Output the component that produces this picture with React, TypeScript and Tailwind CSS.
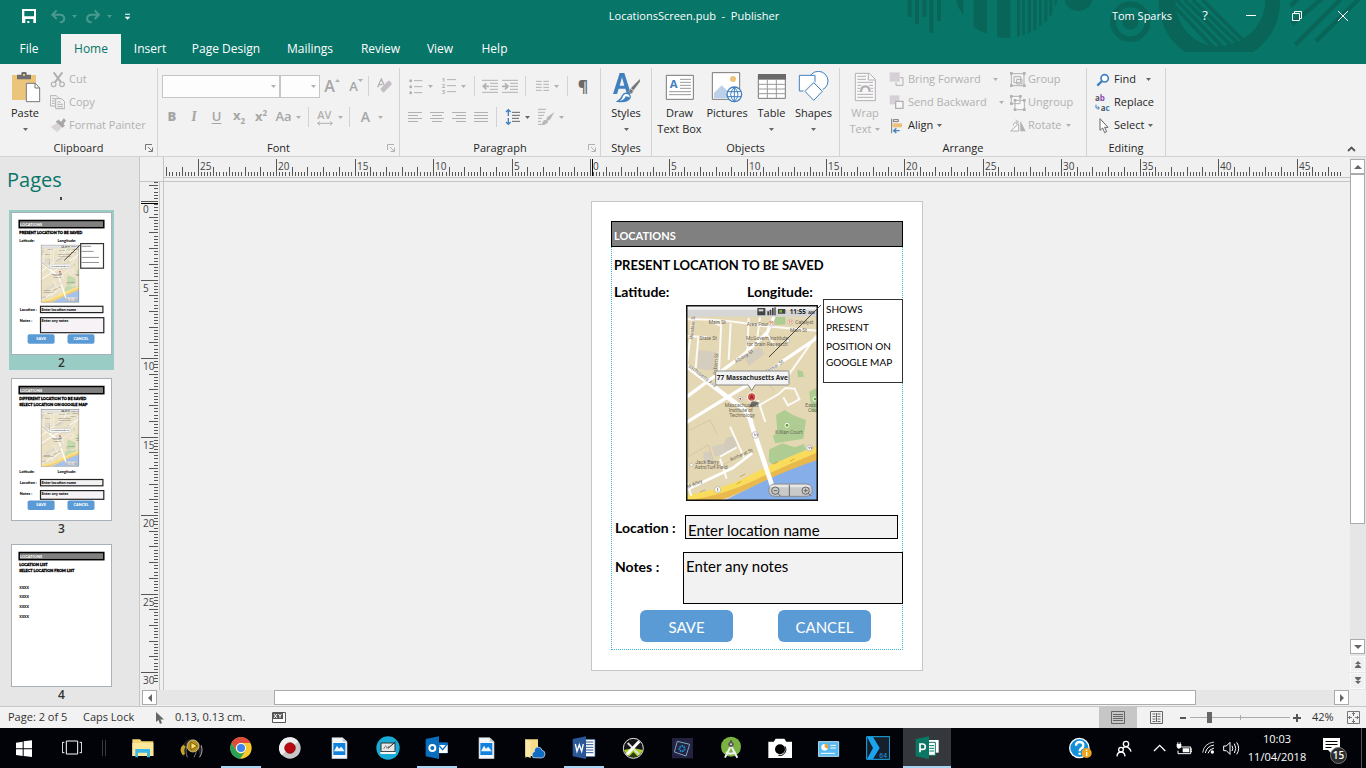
import type { ReactNode } from "react";

const UI = "font-['Open_Sans','Noto_Sans',sans-serif]";
const GREY = "#b1b1b1";
const DARK = "#666666";
const BLUE = "#4080bf";

type Box = [number, number, number, number];

/** Icon drawn on a grid three times finer than the screen. */
function Icon({ b, children }: { b: Box; children: ReactNode }) {
  return (
    <svg viewBox={b.join(" ")} width={b[2] / 3} height={b[3] / 3} className="shrink-0" aria-hidden="true">
      {children}
    </svg>
  );
}

function Caret({ color = DARK }: { color?: string }) {
  return (
    <svg viewBox="0 0 5 3" width="5" height="3" className="shrink-0" aria-hidden="true">
      <path d="M0 0h5L2.5 3z" fill={color} />
    </svg>
  );
}

function Launcher({ color }: { color: string }) {
  return (
    <svg viewBox="0 0 8 8" width="8" height="8" className="absolute right-1 bottom-1" aria-hidden="true">
      <path d="M0.5 6V0.5H7M3 3l4 4M7.5 3.5v4h-4" fill="none" stroke={color} />
    </svg>
  );
}

function Group({ label, width, launcher, children }: { label: string; width: string; launcher?: string; children: ReactNode }) {
  return (
    <section aria-label={label} className={`relative flex shrink-0 flex-col border-r border-[#d2d2d2] ${width}`}>
      <div className="flex-1">{children}</div>
      <div className="h-4 text-center leading-4">{label}</div>
      {launcher && <Launcher color={launcher} />}
    </section>
  );
}

function Big({ icon, lines, width, off, caret }: { icon: ReactNode; lines: string[]; width: string; off?: boolean; caret?: boolean }) {
  return (
    <button className={`flex shrink-0 flex-col items-center ${width} ${off ? "text-[#b1b1b1]" : ""}`}>
      <span className="flex h-[37px] items-center">{icon}</span>
      <span className="h-4 leading-4 whitespace-nowrap">{lines[0]}</span>
      <span className="flex h-4 items-center gap-1 leading-4 whitespace-nowrap">
        {lines[1]}
        {caret && <Caret color={off ? GREY : DARK} />}
      </span>
    </button>
  );
}

function Small({ icon, text, off, caret, gap = "gap-1" }: { icon: ReactNode; text: string; off?: boolean; caret?: boolean; gap?: string }) {
  return (
    <button className={`flex h-[23px] items-center whitespace-nowrap ${off ? "text-[#b1b1b1]" : ""}`}>
      <span className="flex w-[19px] shrink-0 items-center justify-start">{icon}</span>
      <span className={`flex items-center ${gap}`}>
        {text}
        {caret && <Caret color={off ? GREY : DARK} />}
      </span>
    </button>
  );
}

function Cell({ w, label, caret, on, children }: { w: string; label: string; caret?: boolean; on?: boolean; children: ReactNode }) {
  return (
    <button aria-label={label} className={`flex h-6 shrink-0 items-center justify-center gap-1 text-[13px] font-semibold text-[#a6a6a6] ${w}`}>
      {children}
      {caret && <Caret color={on ? DARK : GREY} />}
    </button>
  );
}

const Sep = () => <span className="mx-1 h-5 w-px shrink-0 bg-[#d2d2d2]" />;

function Lines({ rows, w = 14, h = 10 }: { rows: [number, number, number][]; w?: number; h?: number }) {
  return (
    <svg width={w} height={h} viewBox={`0 0 ${w} ${h}`} className="shrink-0" aria-hidden="true">
      {rows.map(([x, y, len]) => (
        <rect key={`${x}-${y}`} x={x} y={y} width={len} height="1" fill={GREY} />
      ))}
    </svg>
  );
}

function TitleArt() {
  return (
    <svg viewBox="0 0 1458 192" width="486" height="64" className="absolute top-0 right-0" aria-hidden="true">
      <g fill="#086558">
        <path d="M83 0h12v50H83zM105 0h12v72h-12zM127 0h12v50h-12zM148 0h12v98h-12zM171 0h12v63h-12z" />
        <path d="M228 0h22v44Q234 25 228 0zM281 0h40v102q-22-8-40-22zM351 0h40v114q-20 1-40-4zM411 0h9v108l-9 2zM427 0h8v104l-8 3zM443 0h10v96l-10 4zM460 0h9v88l-9 5zM477 0h8v76l-8 6zM493 0h9v60l-9 8zM508 0h9v42l-9 10zM524 0h8q-2 12-8 24z" />
        <path d="M554 0h83a42 39 0 0 1-83 0z" />
        <circle cx="751" cy="65" r="24" />
        <path d="M836 0h50c0 80 60 139 125 139 75 0 145-59 145-139h44c0 70-30 120-80 156H918C865 125 836 65 836 0z" />
      </g>
      <g fill="none" stroke="#086558">
        <circle cx="751" cy="65" r="52" strokeWidth="17" />
        <path d="M866 0l138 146M890 0l140 143M914 0l140 137M938 0l138 132M968 0l122 122" strokeWidth="11" />
        <path d="M1232 18l20-20M1236 72l90-76M1246 134L1382-2M1308 124L1437-4" strokeWidth="13" />
      </g>
    </svg>
  );
}

function TitleBar() {
  return (
    <header className="relative h-16 shrink-0 bg-[#077568] text-white">
      <TitleArt />
      <div className="relative flex h-8 items-center text-[11px]">
        <div className="flex flex-1 items-center pl-[22px]">
          <button aria-label="Save">
            <Icon b={[66, 30, 42, 42]}>
              <path d="M66 30h42v42H66zM73 36v16h29V36zM76 60v12h6v-6h6v6h12V60z" fill="#fff" fillRule="evenodd" />
            </Icon>
          </button>
          <button aria-label="Undo" className="ml-[14px] flex items-center gap-1.5">
            <Icon b={[150, 27, 48, 45]}>
              <path d="M170 31l-13 13 13 13M157 44h22c18 0 18 22 0 23" fill="none" stroke="#4a9a90" strokeWidth="6" />
            </Icon>
            <Caret color="#4a9a90" />
          </button>
          <button aria-label="Redo" className="ml-2 flex items-center gap-1.5">
            <Icon b={[255, 27, 48, 45]}>
              <path d="M284 31l13 13-13 13M297 44h-22c-18 0-18 22 0 23" fill="none" stroke="#4a9a90" strokeWidth="6" />
            </Icon>
            <Caret color="#4a9a90" />
          </button>
          <button aria-label="Customize Quick Access Toolbar" className="ml-3">
            <Icon b={[372, 39, 21, 21]}>
              <path d="M375 41h15v3h-15zM374 50h17l-8.500 9z" fill="#fff" />
            </Icon>
          </button>
        </div>
        <h1 className="whitespace-pre">LocationsScreen.pub  -  Publisher</h1>
        <div className="flex flex-1 items-center justify-end">
          <span className="mr-[10px]">Tom Sparks</span>
          <button className="w-[46px] text-[13px]" aria-label="Help">?</button>
          <button className="flex w-[46px] justify-center" aria-label="Minimize">
            <svg width="10" height="10" viewBox="0 0 10 10"><path d="M0 4.500h10" stroke="#fff" /></svg>
          </button>
          <button className="flex w-[46px] justify-center" aria-label="Restore">
            <svg width="10" height="10" viewBox="0 0 10 10" fill="none" stroke="#fff"><path d="M.5 2.500h7v7h-7zM2.500 2.500v-2h7v7h-2" /></svg>
          </button>
          <button className="flex w-[46px] justify-center" aria-label="Close">
            <svg width="10" height="10" viewBox="0 0 10 10"><path d="M0 0l10 10M10 0L0 10" stroke="#fff" /></svg>
          </button>
        </div>
      </div>
      <nav className="relative flex h-8 items-end text-xs">
        <button className="mr-[3px] h-[30px] w-[58px]">File</button>
        <button className="h-[30px] w-[60px] bg-[#f2f2f2] text-[#077568]">Home</button>
        <button className="h-[30px] w-[58px]">Insert</button>
        <button className="h-[30px] w-[94px]">Page Design</button>
        <button className="h-[30px] w-[74px]">Mailings</button>
        <button className="h-[30px] w-[67px]">Review</button>
        <button className="h-[30px] w-[52px]">View</button>
        <button className="h-[30px] w-[57px]">Help</button>
      </nav>
    </header>
  );
}

function Combo({ w, label }: { w: string; label: string }) {
  return (
    <span className={`relative flex h-[23px] shrink-0 items-center ${w}`}>
      <select aria-label={label} className="h-full w-full appearance-none border border-[#c6c6c6] bg-[#fdfdfd]">
        <option></option>
      </select>
      <span className="pointer-events-none absolute right-1 flex">
        <Caret color={GREY} />
      </span>
    </span>
  );
}

function ClipboardGroup() {
  return (
    <Group label="Clipboard" width="w-[158px]" launcher="#777777">
      <div className="flex">
        <Big
          width="w-[50px]"
          lines={["Paste"]}
          caret
          icon={
            <Icon b={[33, 213, 93, 96]}>
              <path d="M39 225h72v75H39z" fill="#ecc57d" />
              <path d="M54 238v-14h13v-4q0-4 4-4h8q4 0 4 4v4h13v14z" fill="#6f6f6f" />
              <path d="M72 222h6v5h-6z" fill="#ecc57d" />
              <path d="M82 250h27l13 14v41H82z" fill="#fff" stroke="#777" strokeWidth="3" />
              <path d="M108 250v14h14" fill="none" stroke="#777" strokeWidth="3" />
            </Icon>
          }
        />
        <div>
          <Small off text="Cut" icon={
            <Icon b={[147, 210, 45, 48]}>
              <path d="M158 211l22 30M184 211l-22 30" stroke={GREY} strokeWidth="6" />
              <g fill="none" stroke={GREY} strokeWidth="3.500"><circle cx="158" cy="247" r="7" /><circle cx="183" cy="247" r="7" /></g>
            </Icon>
          } />
          <Small off text="Copy" icon={
            <Icon b={[147, 282, 45, 45]}>
              <g fill="#f2f2f2" stroke={GREY} strokeWidth="3">
                <path d="M148 284h18l9 9v22h-27z" /><path d="M164 293h18l9 9v21h-27z" />
                <path d="M153 293h10M153 300h8M153 307h8M169 303h10M169 310h17M169 317h17" />
              </g>
            </Icon>
          } />
          <Small off text="Format Painter" icon={
            <Icon b={[147, 348, 48, 45]}>
              <path d="M149 374l22-12 14 12-17 17z" fill="#d9d4d9" />
              <path d="M165 359l8-5 18 17-6 5zM180 362l8-12 6 5-8 12z" fill="#a6a6a6" stroke="#a6a6a6" strokeWidth="2" />
            </Icon>
          } />
        </div>
      </div>
    </Group>
  );
}

function FontGroup() {
  return (
    <Group label="Font" width="w-[242px]" launcher={GREY}>
      <div className="flex items-center pt-1.5 pl-1">
        <Combo w="w-[118px]" label="Font name" />
        <Combo w="w-[40px]" label="Font size" />
        <Cell w="w-6" label="Grow font"><span className="text-base leading-none">A</span><span className="-ml-1 mb-3 rotate-180"><Caret color={GREY} /></span></Cell>
        <Cell w="w-6" label="Shrink font"><span className="leading-none">A</span><span className="-ml-1 mb-3"><Caret color={GREY} /></span></Cell>
        <span className="h-5 w-px shrink-0 bg-[#d2d2d2]" />
        <Cell w="w-[30px]" label="Clear formatting">
          <Icon b={[1131, 234, 45, 48]}>
            <path d="M1133 262l11-25 8 18M1137 254h10" fill="none" stroke={GREY} strokeWidth="4" />
            <path d="M1143 264l21-21q3-2 6 1l4 5q2 3 0 5l-21 22q-3 2-6-1l-5-6q-1-2 1-5z" fill="#c4bfc4" />
          </Icon>
        </Cell>
      </div>
      <div className="flex items-center pt-[7px] pl-[3px]">
        <Cell w="w-[22px]" label="Bold"><b>B</b></Cell>
        <Cell w="w-[22px]" label="Italic"><i className="font-serif text-sm">I</i></Cell>
        <Cell w="w-[23px]" label="Underline"><span className="underline underline-offset-2">U</span></Cell>
        <Cell w="w-[22px]" label="Subscript"><span className="font-bold">x<span className="align-sub text-[8px]">2</span></span></Cell>
        <Cell w="w-[22px]" label="Superscript"><span className="font-bold">x<span className="align-super text-[8px]">2</span></span></Cell>
        <Cell w="w-8" label="Change case" caret>Aa</Cell>
        <Sep />
        <Cell w="w-8" label="Character spacing" caret>
          <Icon b={[948, 318, 54, 60]}>
            <text x="952" y="354" fontSize="33" fill={GREY} fontWeight="600">AV</text>
            <path d="M953 367h44M960 361l-7 6 7 6M990 361l7 6-7 6" fill="none" stroke={GREY} strokeWidth="3" />
          </Icon>
        </Cell>
        <Sep />
        <Cell w="w-9" label="Font color" caret><span className="pr-1 text-sm">A</span></Cell>
      </div>
    </Group>
  );
}

function ParagraphGroup() {
  return (
    <Group label="Paragraph" width="w-[201px]" launcher={GREY}>
      <div className="flex items-center pt-1.5 pl-1">
        <Cell w="w-[33px]" label="Bullets" caret>
          <Icon b={[36, 51, 48, 51]}>
            <path d="M54 59h25M54 77h25M54 95h25" stroke={GREY} strokeWidth="3" />
            <g fill={GREY}><circle cx="44" cy="59" r="4.500" /><circle cx="44" cy="77" r="4.500" /><circle cx="44" cy="95" r="4.500" /></g>
          </Icon>
        </Cell>
        <Cell w="w-[33px]" label="Numbering" caret>
          <Icon b={[135, 48, 48, 60]}>
            <path d="M153 59h27M153 77h27M153 95h27" stroke={GREY} strokeWidth="3" />
            <g fill={GREY} fontSize="18" fontWeight="700"><text x="137" y="66">1</text><text x="137" y="84">2</text><text x="137" y="102">3</text></g>
          </Icon>
        </Cell>
        <Sep />
        <Cell w="w-[21px]" label="Decrease indent">
          <Icon b={[258, 54, 51, 42]}>
            <path d="M261 58h48M285 67h24M285 76h24M285 85h24M261 94h48" stroke={GREY} strokeWidth="3" />
            <path d="M282 76h-15M274 67l-9 9 9 9" fill="none" stroke={GREY} strokeWidth="5" />
          </Icon>
        </Cell>
        <Cell w="w-[21px]" label="Increase indent">
          <Icon b={[327, 54, 51, 42]}>
            <path d="M327 58h48M351 67h24M351 76h24M351 85h24M327 94h48" stroke={GREY} strokeWidth="3" />
            <path d="M327 76h15M336 67l9 9-9 9" fill="none" stroke={GREY} strokeWidth="5" />
          </Icon>
        </Cell>
        <Sep />
        <Cell w="w-[33px]" label="Columns" caret>
          <Icon b={[420, 60, 45, 36]}>
            <path d="M423 64h17M423 73h17M423 82h17M423 91h17M445 64h17M445 73h17M445 82h17M445 91h17" stroke={GREY} strokeWidth="3" />
          </Icon>
        </Cell>
        <Sep />
        <Cell w="w-[22px]" label="Show formatting marks"><span className="text-base font-bold text-[#6a6a6a]">¶</span></Cell>
      </div>
      <div className="flex items-center pt-[7px] pl-1">
        <Cell w="w-[22px]" label="Align left"><Lines rows={[[0, 0, 14], [0, 3, 10], [0, 6, 14], [0, 9, 10]]} /></Cell>
        <Cell w="w-[22px]" label="Center"><Lines rows={[[0, 0, 14], [2, 3, 10], [0, 6, 14], [2, 9, 10]]} /></Cell>
        <Cell w="w-[22px]" label="Align right"><Lines rows={[[0, 0, 14], [4, 3, 10], [0, 6, 14], [4, 9, 10]]} /></Cell>
        <Cell w="w-[22px]" label="Justify"><Lines rows={[[0, 0, 14], [0, 3, 14], [0, 6, 14], [0, 9, 14]]} /></Cell>
        <Sep />
        <Cell w="w-[33px]" label="Line spacing" caret on>
          <Icon b={[327, 144, 48, 54]}>
            <path d="M348 157h24M348 166h24M348 175h21M348 184h24" stroke={DARK} strokeWidth="3" />
            <path d="M337 150v18M337 174v18M330 156l7-7 7 7M330 186l7 7 7-7" fill="none" stroke={BLUE} strokeWidth="4" />
          </Icon>
        </Cell>
        <Cell w="w-[33px]" label="Paragraph styles" caret>
          <Icon b={[423, 144, 54, 54]}>
            <path d="M426 148h24M426 157h21M426 166h18M426 175h12M426 184h9M426 193h21" stroke={GREY} strokeWidth="3" />
            <path d="M475 156l-22 16-2 6 5 4q6-2 8-6z" fill="#b8b8b8" />
            <path d="M438 192q2-13 13-13 7 2 5 8-4 8-18 5z" fill="#b8b8b8" />
          </Icon>
        </Cell>
      </div>
    </Group>
  );
}

function ObjectsGroup() {
  return (
    <Group label="Objects" width="w-[188px]">
      <div className="flex pl-1">
        <Big width="w-[47px]" lines={["Draw", "Text Box"]} icon={
          <Icon b={[810, 33, 90, 84]}>
            <path d="M814 40h81v72h-81z" fill="#fff" stroke="#777" strokeWidth="3" />
            <text x="824" y="79" fontSize="34" fontWeight="700" fill={BLUE}>A</text>
            <path d="M855 52h33M855 61h33M855 70h33M855 79h33M822 89h66M822 98h66" stroke="#999" strokeWidth="3" />
          </Icon>
        } />
        <Big width="w-12" lines={["Pictures"]} icon={
          <Icon b={[951, 33, 96, 96]}>
            <path d="M955 38h82v80h-82z" fill="#fff" stroke="#777" strokeWidth="3" />
            <circle cx="1017" cy="57" r="9" fill="#efc27a" />
            <path d="M960 115v-16l23-23 27 27v12z" fill="#bcd0ea" />
            <circle cx="1021" cy="103" r="22" fill="#fff" stroke={BLUE} strokeWidth="4" />
            <path d="M1001 95h40M1001 110h40M1021 81v44M1021 82q-22 21 0 43M1021 82q22 21 0 43" fill="none" stroke={BLUE} strokeWidth="3" />
          </Icon>
        } />
        <Big width="w-[41px]" lines={["Table"]} caret icon={
          <Icon b={[1086, 36, 90, 81]}>
            <path d="M1090 42h81v70h-81z" fill="#fff" stroke="#777" strokeWidth="3" />
            <path d="M1089 39h84v17h-84z" fill="#6a6a6a" />
            <path d="M1090 70h82M1090 84h82M1090 98h82M1117 56v56M1144 56v56" stroke="#999" strokeWidth="3" />
          </Icon>
        } />
        <Big width="w-[43px]" lines={["Shapes"]} caret icon={
          <Icon b={[1209, 33, 93, 93]}>
            <circle cx="1270" cy="63" r="29" fill="#fff" stroke={BLUE} strokeWidth="3" />
            <path d="M1213 46h47v47h-47z" fill="#fff" stroke={BLUE} strokeWidth="3" />
            <path d="M1256 68l26 26-26 27-26-27z" fill="#fff" stroke="#f2f2f2" strokeWidth="9" />
            <path d="M1256 68l26 26-26 27-26-27z" fill="#fff" stroke={BLUE} strokeWidth="3" />
          </Icon>
        } />
      </div>
    </Group>
  );
}

function ArrangeGroup() {
  return (
    <Group label="Arrange" width="w-[247px]">
      <div className="flex pl-1">
        <Big off width="w-[42px]" lines={["Wrap", "Text"]} caret icon={
          <Icon b={[39, 33, 69, 90]}>
            <path d="M43 37h42l18 18v64H43z" fill="#faf7fa" stroke={GREY} strokeWidth="3" />
            <path d="M82 37v20h21M49 46h26M49 55h26M49 64h47M49 73h12M85 73h11M49 82h8M89 82h8M49 91h6M91 91h6M49 100h47M49 109h47" fill="none" stroke={GREY} strokeWidth="3" />
            <path d="M60 93q0-17 13-17t13 17" fill="none" stroke={GREY} strokeWidth="7" />
          </Icon>
        } />
        <div className="w-[123px] pl-[3px]">
          <Small off text="Bring Forward" caret gap="gap-3" icon={
            <Icon b={[147, 33, 45, 45]}>
              <path d="M180 50h9v23h-21v-9" fill="none" stroke={GREY} strokeWidth="3" />
              <path d="M149 34h30v28h-30z" fill="#d6d0d6" />
            </Icon>
          } />
          <Small off text="Send Backward" caret gap="gap-3" icon={
            <Icon b={[147, 102, 45, 45]}>
              <path d="M149 103h29v27h-29z" fill="#d6d0d6" />
              <path d="M167 121h22v21h-22z" fill="#faf7fa" stroke={GREY} strokeWidth="4" />
            </Icon>
          } />
          <Small text="Align" caret icon={
            <Icon b={[150, 168, 42, 48]}>
              <path d="M158 170v44" stroke="#777" strokeWidth="3" />
              <path d="M163 173h15v6h-15z" fill="none" stroke="#777" strokeWidth="3" />
              <path d="M161 184h28v12h-28z" fill="#ecc07a" />
              <path d="M182 206h-17M172 199l-8 7 8 7" fill="none" stroke={BLUE} strokeWidth="4" />
            </Icon>
          } />
        </div>
        <div>
          <Small off text="Group" icon={
            <Icon b={[507, 27, 54, 51]}>
              <path d="M514 35h38v36h-38zM522 44h20v18h-20zM530 52h16v14h-16z" fill="none" stroke={GREY} strokeWidth="3" />
              <path d="M510 30h8v8h-8zM549 30h8v8h-8zM510 67h8v8h-8zM549 67h8v8h-8z" fill={GREY} />
            </Icon>
          } />
          <Small off text="Ungroup" icon={
            <Icon b={[507, 96, 54, 54]}>
              <path d="M514 103h26v22h-26zM525 115h28v28h-28z" fill="#faf7fa" stroke={GREY} strokeWidth="3" />
              <path d="M510 99h8v8h-8zM537 99h8v8h-8zM510 121h8v8h-8zM521 111h8v8h-8zM549 111h8v8h-8zM521 139h8v8h-8zM549 139h8v8h-8z" fill={GREY} />
            </Icon>
          } />
          <Small off text="Rotate" caret icon={
            <Icon b={[507, 171, 54, 42]}>
              <path d="M512 207h24v-22z" fill="#faf7fa" stroke={GREY} strokeWidth="3" />
              <path d="M541 176l16 32h-16z" fill={GREY} />
              <path d="M520 190q0-10 14-10M528 173l7 7-7 6" fill="none" stroke={GREY} strokeWidth="3" />
            </Icon>
          } />
        </div>
      </div>
    </Group>
  );
}

function Ribbon() {
  return (
    <div className="relative flex h-[93px] shrink-0 border-b border-[#d2d2d2] bg-[#f2f2f2] pt-1 text-[11px] text-[#262626]">
      <ClipboardGroup />
      <FontGroup />
      <ParagraphGroup />
      <Group label="Styles" width="w-[51px]">
        <Big width="w-[50px]" lines={["Styles"]} caret icon={
          <Icon b={[654, 30, 87, 96]}>
            <path d="M657 99l20-63h14l20 63h-12l-5-16h-20l-5 16zM677 74h14l-7-25z" fill={BLUE} />
            <path d="M738 53v9l-20 27-8-7zM710 83l8 7-4 8q-7 0-10-7z" fill="#757575" stroke="#f2f2f2" />
            <path d="M671 121q12-6 14-16 5-10 14-8 12 3 9 14-8 14-37 10z" fill="#fff" stroke={BLUE} strokeWidth="4" />
            <path d="M671 121q20-2 24-15 9 1 13 4-6 14-37 11z" fill={BLUE} />
          </Icon>
        } />
      </Group>
      <ObjectsGroup />
      <ArrangeGroup />
      <Group label="Editing" width="w-[79px]">
        <div className="pl-2">
          <Small text="Find" caret gap="gap-2.5" icon={
            <Icon b={[762, 33, 45, 42]}>
              <circle cx="791" cy="49" r="11" fill="#fff" stroke={BLUE} strokeWidth="5" />
              <path d="M783 57l-14 14" stroke={BLUE} strokeWidth="7" />
            </Icon>
          } />
          <Small text="Replace" icon={
            <Icon b={[762, 90, 51, 66]}>
              <g fontSize="24" fontWeight="700"><text x="762" y="118"><tspan fill="#555">a</tspan><tspan fill="#8a4fae">b</tspan></text><text x="779" y="148"><tspan fill="#555">a</tspan><tspan fill={BLUE}>c</tspan></text></g>
              <path d="M765 128v10h9M771 133l4 5-4 5" fill="none" stroke={BLUE} strokeWidth="3" />
            </Icon>
          } />
          <Small text="Select" caret icon={
            <Icon b={[762, 165, 45, 51]}>
              <path d="M777 170v35l8-7 6 14 6-3-6-13h10z" fill="#fff" stroke="#666" strokeWidth="3" />
            </Icon>
          } />
        </div>
      </Group>
      <div className="flex flex-1 items-end justify-end pr-2.5 pb-1">
        <button aria-label="Collapse the Ribbon">
          <svg width="9" height="6" viewBox="0 0 9 6"><path d="M1 5l3.500-3.500L8 5" fill="none" stroke="#555" strokeWidth="1.800" /></svg>
        </button>
      </div>
    </div>
  );
}

function MapArt() {
  return (
    <>
      <rect x="18" y="15" width="396" height="588" fill="#e4d7b3" />
      <path d="M55 150l50 6v56l-52-6zM190 165l50-25 14 22-48 36zM95 440l40-10 8 30-38 10zM70 455l24 0 4 30-26 6z" fill="#d5cdbd" />
      <ellipse cx="152" cy="432" rx="19" ry="22" fill="#d2cabb" />
      <path d="M30 390l60-30 22 45M25 370v100l60-35 22 70 62-30M250 230l30 40M230 90l60 50" fill="none" stroke="#d6c8a4" strokeWidth="3" />
      <path d="M282 50h34v24h-32zM388 275l22-12v74l-16-4zM288 344l26-14 26 16 38 14-8 56-84 14-8-22 14-10zM268 448l40-18 36 12 28-10 6 18-98 46-14-12zM352 210l16 4 4 16-18 2z" fill="#afcd92" />
      <path d="M414 462v141H130z" fill="#86aee8" />
      <path d="M18 597q120-18 220-72 90-44 176-90v44q-80 26-170 68-70 36-130 56H18z" fill="#eab94e" />
      <path d="M18 585q120-18 200-64 100-50 196-84v20q-100 40-190 84-90 44-206 62z" fill="#f9dc5c" />
      <g fill="none" stroke="#fbfaf6" strokeWidth="6">
        <path d="M18 58q100-4 230 20l166 14M38 50L20 200M20 108l66 4M55 112l-8 92M124 64l-8 170M152 70l-6 110M92 65l30 12M206 54l-4 98M240 52l-8 60M258 100l30 40M325 226l84-120M234 318l62-36 20-18 28 2 14 32-34 18-14-24M234 300l22 66M120 470l50-28M120 476l20 60M22 548l12 40M150 380l42 92" />
      </g>
      <g fill="none" stroke="#fff" strokeWidth="10">
        <path d="M18 292L190 165l72-68 20-48M18 368L210 250l204-138" />
        <path d="M18 196l128 98 46 34q18 20 24 50l64 190" strokeWidth="14" />
        <path d="M18 570l140-66 58-44" strokeWidth="8" />
      </g>
      <g fontSize="15" fill="#6b6558" fontFamily="Roboto, sans-serif">
        <text x="86" y="71">Main St</text><text x="330" y="96">Main St</text><text x="200" y="77">Area Four</text><text x="346" y="71">Catalyst</text>
        <text x="58" y="120">State St</text><text x="198" y="120">McGovern Institute</text><text x="200" y="137">for Brain Research</text>
        <text transform="translate(38 118) rotate(-84)">Windsor St</text><text transform="translate(110 226) rotate(-86)">Osborn St</text>
        <text transform="translate(168 190) rotate(-33)">Albany St</text><text transform="translate(258 222) rotate(-33)">Vassar St</text>
        <text transform="translate(24 200) rotate(38)">sachusetts Ave</text><text transform="translate(152 484) rotate(-24)">Amherst St</text>
        <text transform="translate(22 566) rotate(-22)">St Alley</text><text x="134" y="320">Massachusetts</text><text x="146" y="335">Institute of</text><text x="148" y="350">Technology</text>
        <text x="286" y="401">Killian Court</text><text x="46" y="491">Jack Barry</text><text x="44" y="507">AstroTurf Field</text><text x="376" y="321">Easto</text><text x="384" y="337">Cou</text>
      </g>
      <g fill="#fff" stroke="#aaa" strokeWidth="2"><circle cx="274" cy="71" r="8" /><circle cx="331" cy="66" r="8" /><circle cx="226" cy="405" r="10" /><circle cx="389" cy="444" r="9" /><circle cx="113" cy="569" r="9" /><circle cx="181" cy="296" r="7" /><circle cx="34" cy="495" r="5" /><circle cx="324" cy="123" r="5" /></g>
      <path d="M222 402h3v7M229 402h3v7M385 441h3v7M391 441h3v7M113 564v10" fill="none" stroke="#555" strokeWidth="2" />
      <g fontSize="13" fontWeight="700" fill="#e87722"><text x="269" y="76">H</text><text x="326" y="71">H</text></g>
      <circle cx="181" cy="296" r="3" fill="#b04030" /><circle cx="321" cy="376" r="6" fill="#63a836" stroke="#fff" strokeWidth="3" /><circle cx="405" cy="297" r="6" fill="#63a836" stroke="#fff" strokeWidth="3" />
      <g fill="none" stroke="#c09030" strokeWidth="2"><path d="M60 576l16-6M180 530l16-8M170 552l14-8M280 492l14-6M330 484l14-8" /></g>
      <path d="M207 322l9-20 24 6-18 12z" fill="#555" opacity=".8" />
      <circle cx="215" cy="291" r="14" fill="#fff" opacity=".8" /><circle cx="215" cy="291" r="11" fill="#d9514c" /><path d="M210 297l5-12 5 12M212 293h6" fill="none" stroke="#5e1715" strokeWidth="2" />
      <path d="M111 213h212q4 0 4 4v34q0 4-4 4h-98l-10 17-10-17h-94q-4 0-4-4v-34q0-4 4-4z" fill="#f4f4f4" stroke="#8b8b8b" strokeWidth="3" />
      <text x="217" y="241" fontSize="19.500" fontWeight="700" textAnchor="middle" fill="#222">77 Massachusetts Ave</text>
      <rect x="266" y="552" width="131" height="37" rx="18" fill="#c9c9c9" stroke="#8a8a8a" strokeWidth="3" />
      <path d="M268 562q4-8 16-8h96q10 0 14 8z" fill="#e8e8e8" />
      <g fill="none" stroke="#666" strokeWidth="3"><path d="M328 554v34M281 572h11M372 572h11M377 566v11M293 579l8 9M384 579l8 8" /><circle cx="286" cy="572" r="11" /><circle cx="377" cy="572" r="11" /></g>
      <rect x="18" y="15" width="396" height="35" fill="#d6d6d6" /><rect x="18" y="15" width="396" height="14" fill="#f2f2f2" />
      <path d="M232 24h24v22h-24zM262 34h5v12h-5zM269 29h5v17h-5zM276 24h5v22h-5zM283 22h4v24h-4zM294 27h22v14h-22z" fill="#444" /><path d="M298 30h8v8h-8z" fill="#7db72f" /><path d="M236 28h14v6h-14z" fill="#ddd" />
      <text x="329" y="41" fontSize="19" fontWeight="700" fill="#222">11:55</text><text x="385" y="41" fontSize="12" fontWeight="700" fill="#333">AM</text>
      <rect x="20" y="17" width="392" height="584" fill="none" stroke="#111" strokeWidth="5" />
    </>
  );
}

function ThumbFrame({ lines, children }: { lines: string[]; children?: ReactNode }) {
  return (
    <svg viewBox="0 0 330 468" width="101" height="143" className="border border-[#a8b0b8] bg-white font-['Lato',sans-serif]" aria-hidden="true">
      <rect x="24" y="24" width="282" height="24" fill="#808080" stroke="#000" strokeWidth="5" />
      <text x="27" y="42" fontSize="13" fontWeight="900" fill="#fff">LOCATIONS</text>
      <g fontSize="13" fontWeight="900">
        {lines.map((t, i) => (
          <text key={t} x="24" y={69 + i * 20} stroke="#000">{t}</text>
        ))}
        {children}
      </g>
    </svg>
  );
}

function ThumbForm({ labelY, mapY, locY, notesY, notesH, btnY }: { labelY: number; mapY: number; locY: number; notesY: number; notesH: number; btnY: number }) {
  return (
    <>
      <text x="24" y={labelY}>Latitude:</text>
      <text x="152" y={labelY}>Longitude:</text>
      <svg x="96" y={mapY} width="128" height="192" viewBox="18 15 396 588" preserveAspectRatio="none" opacity=".75"><MapArt /></svg>
      <text x="26" y={locY + 16}>Location :</text>
      <rect x="95" y={locY} width="208" height="21" fill="#f2f2f2" stroke="#222" strokeWidth="4" />
      <text x="98" y={locY + 16}>Enter location name</text>
      <text x="26" y={notesY + 16}>Notes :</text>
      <rect x="95" y={notesY} width="211" height={notesH} fill="#f6f2f6" stroke="#222" strokeWidth="4" />
      <text x="98" y={notesY + 16}>Enter any notes</text>
      <rect x="52" y={btnY} width="90" height="32" rx="6" fill="#5b9bd5" />
      <rect x="185" y={btnY} width="90" height="32" rx="6" fill="#5b9bd5" />
      <g fill="#fff" textAnchor="middle"><text x="97" y={btnY + 20}>SAVE</text><text x="230" y={btnY + 20}>CANCEL</text></g>
    </>
  );
}

function PagesPanel() {
  const thumbs = [
    {
      n: 2,
      art: (
        <ThumbFrame lines={["PRESENT LOCATION TO BE SAVED"]}>
          <ThumbForm labelY={97} mapY={105} locY={310} notesY={348} notesH={50} btnY={403} />
          <rect x="229" y="101" width="76" height="82" fill="#fff" stroke="#333" strokeWidth="4" />
          <path d="M174 157l54-52" stroke="#333" strokeWidth="3" />
          <path d="M232 110h32M232 127h40M232 147h58M232 164h58" stroke="#888" strokeWidth="3" />
        </ThumbFrame>
      ),
    },
    {
      n: 3,
      art: (
        <ThumbFrame lines={["DIFFERENT LOCATION TO BE SAVED", "SELECT LOCATION ON GOOGLE MAP"]}>
          <ThumbForm labelY={314} mapY={99} locY={334} notesY={371} notesH={29} btnY={404} />
        </ThumbFrame>
      ),
    },
    {
      n: 4,
      art: (
        <ThumbFrame lines={["LOCATION LIST", "SELECT LOCATION FROM LIST"]}>
          {[145, 177, 209, 241].map((y) => (
            <text key={y} x="24" y={y} fontSize="12">XXXX</text>
          ))}
        </ThumbFrame>
      ),
    },
  ];
  return (
    <aside className="flex w-[140px] shrink-0 flex-col overflow-hidden border-r border-[#c6c6c6] bg-[#e6e6e6]">
      <h2 className="h-10 shrink-0 pl-[7px] text-xl leading-[46px] text-[#077568]">Pages</h2>
      <span className="mb-[10px] ml-[60px] h-[3px] w-0.5 shrink-0 bg-[#444]" />
      <ol className="flex flex-col gap-1.5 pl-[9px]">
        {thumbs.map(({ n, art }) => (
          <li key={n}>
            <button className={`flex h-40 w-[105px] flex-col items-center pt-0.5 text-xs font-semibold text-[#333] ${n === 2 ? "bg-[#9accc6]" : ""}`} aria-label={`Page ${n}`}>
              {art}
              <span className="leading-[15px]">{n}</span>
            </button>
          </li>
        ))}
      </ol>
    </aside>
  );
}

const CM = 15.7;
const X0 = 426;
const Y0 = 19;

function HRuler() {
  const ticks = Array.from({ length: 375 }, (_, i) => i - 135);
  return (
    <svg width="1180" height="20" className="block font-['Open_Sans',sans-serif]" aria-hidden="true">
      {ticks.map((i) => {
        const x = Math.round(X0 + (i * CM) / 5);
        const h = i % 25 === 0 ? 17 : i % 5 === 0 ? 9 : 4;
        return <rect key={i} x={x} y={19 - h} width="1" height={h} fill="#555" />;
      })}
      <rect x={X0 + 2} y="2" width="1" height="17" fill="#000" />
      {Array.from({ length: 15 }, (_, i) => i * 5 - 25).map((c) => (
        <text key={c} x={Math.round(X0 + c * CM) + (c === 0 ? 3 : 2)} y="13" fontSize="10" fill="#444">{Math.abs(c)}</text>
      ))}
    </svg>
  );
}

function VRuler() {
  const ticks = Array.from({ length: 160 }, (_, i) => i - 6);
  return (
    <svg width="19" height="506" className="block font-['Open_Sans',sans-serif]" aria-hidden="true">
      {ticks.map((i) => {
        const y = Math.round(Y0 + (i * CM) / 5);
        const w = i % 25 === 0 ? 17 : i % 5 === 0 ? 9 : 4;
        return <rect key={i} x={18 - w} y={y} width={w} height="1" fill="#555" />;
      })}
      <rect x="1" y={Y0 + 2} width="17" height="1" fill="#000" />
      {Array.from({ length: 7 }, (_, i) => i * 5).map((c) => (
        <text key={c} x="3" y={Math.round(Y0 + c * CM) + 12} fontSize="10" fill="#444">{c}</text>
      ))}
    </svg>
  );
}

function ScrollBtn({ d, label, plain }: { d: string; label: string; plain?: boolean }) {
  return (
    <button aria-label={label} className={`flex w-[15px] shrink-0 items-center justify-center border ${plain ? "h-4 border-[#fafafa] bg-[#f0f0f0]" : "h-[15px] border-[#ababab] bg-white"}`}>
      <svg width="8" height="8" viewBox="0 0 8 8"><path d={d} fill="#666" /></svg>
    </button>
  );
}

function PublicationPage() {
  return (
    <article className="relative h-[470px] w-[332px] shrink-0 border border-[#c6c6c6] bg-white font-['Lato',sans-serif] text-black">
      <div className="absolute top-[19px] left-[19px] h-[429px] w-[292px] border border-dotted border-[#38b6d8]" />
      <h3 className="absolute top-[19px] left-[19px] h-[26px] w-[292px] border border-black bg-[#808080] pl-0.5 text-[11px] leading-7 font-bold text-white">LOCATIONS</h3>
      <p className="absolute top-[53px] left-[22px] text-[13px] leading-5 font-bold whitespace-nowrap">PRESENT LOCATION TO BE SAVED</p>
      <p className="absolute top-[80px] left-[22px] text-[14px] leading-5 font-bold">Latitude:</p>
      <p className="absolute top-[80px] left-[155px] text-[14px] leading-5 font-bold">Longitude:</p>
      <svg viewBox="18 15 396 588" width="132" height="196" className="absolute top-[103px] left-[94px] font-['Open_Sans',sans-serif]" role="img" aria-label="Street map centred on 77 Massachusetts Ave">
        <MapArt />
      </svg>
      <div className="absolute top-[97px] left-[231px] h-[84px] w-20 border border-[#333] bg-white pl-0.5 text-[10px]">
        <p className="leading-[18px]">SHOWS<br />PRESENT</p>
        <p className="pt-0.5 leading-4 whitespace-nowrap">POSITION ON<br />GOOGLE MAP</p>
      </div>
      <svg width="54" height="54" viewBox="0 0 54 54" className="absolute top-[102px] left-[176px]" aria-hidden="true">
        <path d="M1 53L53 1" stroke="#444" />
      </svg>
      <label htmlFor="location" className="absolute top-[316px] left-[23px] text-[14px] leading-5 font-bold">Location :</label>
      <input id="location" defaultValue="Enter location name" className="absolute top-[313px] left-[93px] h-6 w-[213px] border border-black bg-[#f2f2f2] pt-1.5 pl-0.5 text-[15px] leading-4" />
      <label htmlFor="notes" className="absolute top-[355px] left-[23px] text-[14px] leading-5 font-bold">Notes :</label>
      <textarea id="notes" defaultValue="Enter any notes" className="absolute top-[350px] left-[91px] h-[52px] w-[220px] resize-none border border-black bg-[#f2f2f2] pt-[3px] pl-0.5 text-[15px] leading-5" />
      <button className="absolute top-[408px] left-[48px] h-8 w-[93px] rounded-md bg-[#5b9bd5] pt-1 text-[15px] text-white">SAVE</button>
      <button className="absolute top-[408px] left-[186px] h-8 w-[93px] rounded-md bg-[#5b9bd5] pt-1 text-[15px] text-white">CANCEL</button>
    </article>
  );
}

function Workspace() {
  return (
    <section className="flex min-w-0 flex-1 flex-col bg-[#f0f0f0]">
      <div className="flex min-h-0 flex-1">
        <div className="flex w-6 shrink-0 flex-col border-r border-[#c6c6c6]">
          <div className="h-[25px] shrink-0 border-b border-[#c6c6c6]" />
          <div className="w-5 flex-1 overflow-hidden border-r border-[#c6c6c6]"><VRuler /></div>
        </div>
        <div className="flex min-w-0 flex-1 flex-col">
          <div className="h-[25px] shrink-0 overflow-hidden border-b border-[#c6c6c6]">
            <div className="overflow-hidden border-b border-[#c6c6c6]"><HRuler /></div>
          </div>
          <div className="flex min-h-0 flex-1 justify-center overflow-hidden pt-[19px]">
            <PublicationPage />
          </div>
        </div>
        <div className="flex w-4 shrink-0 flex-col bg-[#e6e6e6] pt-0.5">
          <ScrollBtn d="M0 6h8L4 2z" label="Scroll up" />
          <div className="h-[350px] w-[15px] border border-[#ababab] bg-white" />
          <div className="flex-1" />
          <ScrollBtn d="M0 2h8L4 6z" label="Scroll down" />
          <div className="mt-0.5 mb-px flex flex-col gap-px">
            <ScrollBtn plain d="M1 4h6L4 1zM1 7h6L4 4zM1 7h6v1H1z" label="Previous page" />
            <ScrollBtn plain d="M1 1h6L4 4zM1 4h6L4 7zM1 0h6v1H1z" label="Next page" />
          </div>
        </div>
      </div>
      <div className="flex h-4 shrink-0 pr-[17px] pl-0.5">
        <div className="flex h-[15px] flex-1 bg-[#e6e6e6]">
          <ScrollBtn d="M6 0v8L2 4z" label="Scroll left" />
          <div className="h-[15px] w-[117px]" />
          <div className="mr-[138px] h-[15px] flex-1 border border-[#ababab] bg-white" />
          <ScrollBtn d="M2 0v8l4-4z" label="Scroll right" />
        </div>
      </div>
    </section>
  );
}

function StatusBar() {
  return (
    <footer className="flex h-[22px] shrink-0 items-center border-t border-[#c6c6c6] bg-[#f2f2f2] text-[11px] text-[#333]">
      <span className="w-[75px] pl-2">Page: 2 of 5</span>
      <span className="w-[74px] pl-2">Caps Lock</span>
      <span className="flex w-[26px] justify-center pr-1">
        <svg width="8" height="12" viewBox="0 0 8 12" aria-hidden="true"><path d="M0 0v10l2.500-2L4 12l2-1-1.500-3.500H8z" fill="#666" /></svg>
      </span>
      <span className="w-[97px]">0.13, 0.13 cm.</span>
      <svg width="14" height="11" viewBox="0 0 14 11" aria-hidden="true"><path d="M.5.5h13v10H.5z" fill="#fff" stroke="#555" /><path d="M1 1h10v6H1z" fill="#555" /><path d="M2 2l3 4M5 2L2 6M6.500 2L8 4l1.500-2M8 4v2" stroke="#fff" fill="none" /></svg>
      <div className="flex h-full flex-1 items-center justify-end">
        <button aria-label="Single page" className="flex h-full w-[38px] items-center justify-center bg-[#c6c6c6]">
          <svg width="14" height="13" viewBox="0 0 14 13"><path d="M.5.5h13v12H.5zM2 3.500h10M2 5.500h10M2 7.500h10M2 9.500h10" fill="none" stroke="#666" /></svg>
        </button>
        <button aria-label="Two-page spread" className="flex h-full w-[38px] items-center justify-center">
          <svg width="13" height="13" viewBox="0 0 13 13"><path d="M.5.5h12v12H.5zM6.500 2v9M2.500 3h3M2.500 5.500h3M2.500 8h3M2.500 10.500h3M7.500 3h3M7.500 5.500h3M7.500 8h3M7.500 10.500h3" fill="none" stroke="#666" /></svg>
        </button>
        <button aria-label="Zoom out" className="flex w-[15px] justify-center"><span className="h-0.5 w-1.5 bg-[#555]" /></button>
        <input
          type="range"
          aria-label="Zoom"
          min={0}
          max={100}
          defaultValue={18}
          className="h-[11px] w-[100px] appearance-none bg-[linear-gradient(#ababab,#ababab),linear-gradient(#ababab,#ababab)] bg-[length:100%_1px,1px_5px] bg-center bg-no-repeat [&::-webkit-slider-thumb]:h-[11px] [&::-webkit-slider-thumb]:w-[5px] [&::-webkit-slider-thumb]:appearance-none [&::-webkit-slider-thumb]:bg-[#666]"
        />
        <button aria-label="Zoom in" className="ml-[3px] flex w-2 justify-center">
          <svg width="8" height="8" viewBox="0 0 8 8"><path d="M4 0v8M0 4h8" stroke="#555" strokeWidth="2" /></svg>
        </button>
        <span className="w-[46px] pl-[11px]">42%</span>
        <button aria-label="Show whole page" className="mr-1.5 ml-0">
          <svg width="13" height="13" viewBox="0 0 13 13"><path d="M.5.5h12v12H.5zM6.500 1v4M5 3l1.500-1.500L8 3M6.500 12V8M5 10l1.500 1.500L8 10M1 6.500h4M3 5L1.500 6.500 3 8M12 6.500H8M10 5l1.500 1.500L10 8" fill="none" stroke="#777" /></svg>
        </button>
      </div>
    </footer>
  );
}

function PictureFile() {
  return (
    <Icon b={[990, 155, 51, 66]}>
      <path d="M993 157h32l13 12v51h-45z" fill="#f4f7fa" stroke="#b9bdc2" strokeWidth="2" />
      <path d="M1025 157v12h13z" fill="#c4c8cc" />
      <path d="M997 173h36v36h-36z" fill="#1182dd" />
      <path d="M999 198l9-17 6 9 7-6 10 14z" fill="#f4f7fa" />
    </Icon>
  );
}

const taskIcons: { name: string; open?: boolean; active?: boolean; icon: ReactNode }[] = [
  { name: "File Explorer", icon: (
    <Icon b={[393, 159, 72, 60]}><path d="M397 163h23l5 6h35v44h-63z" fill="#f7d774" /><path d="M397 174h63v39h-63z" fill="#fce79a" /><path d="M406 217v-25h44v25h-9v-14h-27v14z" fill="#3bb6e6" /></Icon>
  ) },
  { name: "Media player", icon: (
    <Icon b={[540, 155, 72, 66]}><path d="M545 200q-2-28 22-38l14-2q26 12 25 42l-6 13q-3-20-12-28l-26-14q-8 18-10 44z" fill="#222" /><path d="M548 210q-14-20 2-32l7 6q-7 10-2 22z" fill="#c9a227" /><path d="M562 216q-8-22 0-34M582 216q10-14 4-28" fill="none" stroke="#777" strokeWidth="3" /><circle cx="579" cy="182" r="18" fill="#b5901e" stroke="#eee3b0" strokeWidth="2" /><path d="M573 171l19 11-19 11z" fill="#ffe066" stroke="#4a3a00" strokeWidth="2" /><path d="M598 216q12-14 6-36" fill="none" stroke="#aaa" strokeWidth="3" /></Icon>
  ) },
  { name: "Google Chrome", open: true, icon: (
    <Icon b={[690, 156, 66, 66]}><circle cx="723" cy="189" r="32" fill="#f7c92f" /><path d="M695 173a32 32 0 0 1 56 0h-28a16 16 0 0 0-14 8z" fill="#dd4b3e" /><path d="M695 173a32 32 0 0 0 25 48l17-24a16 16 0 0 1-28 0z" fill="#27a35a" /><path d="M695 173l14 24a16 16 0 0 1 14-24h28a32 32 0 0 0-56 0z" fill="#dd4b3e" /><circle cx="723" cy="189" r="15" fill="#fff" /><circle cx="723" cy="189" r="12" fill="#3f83f0" /></Icon>
  ) },
  { name: "Recorder", icon: (
    <Icon b={[837, 153, 66, 66]}><circle cx="870" cy="186" r="32" fill="#c8c8c8" /><path d="M870 154a32 32 0 0 1 25 13l-50 40a32 32 0 0 1 25-53z" fill="#eee" /><circle cx="870" cy="186" r="16" fill="#b80a10" stroke="#7a0206" strokeWidth="2" /></Icon>
  ) },
  { name: "Picture document", icon: <PictureFile /> },
  { name: "Drawing app", icon: (
    <Icon b={[1128, 153, 72, 72]}><circle cx="1164" cy="189" r="35" fill="#17abd6" /><path d="M1143 174h42v26h-42z" fill="#e8e8e8" stroke="#333" strokeWidth="3" /><path d="M1141 201h46v6h-46z" fill="#f6f6f6" /><path d="M1151 192l6-10 4 8 6-8" fill="none" stroke="#888" strokeWidth="3" /><path d="M1164 190l23-20" stroke="#222" strokeWidth="3" /></Icon>
  ) },
  { name: "Outlook", open: true, icon: (
    <Icon b={[1275, 153, 72, 72]}><path d="M1315 172h28v33h-28z" fill="#0b72c6" /><path d="M1317 180h26v24h-26z" fill="#fff" /><path d="M1317 182l11 12 15-18" fill="none" stroke="#0b72c6" strokeWidth="4" /><path d="M1277 162l40-8v68l-40-8z" fill="#0a6ebd" /><circle cx="1297" cy="189" r="9" fill="none" stroke="#fff" strokeWidth="6" /></Icon>
  ) },
  { name: "Picture document 2", icon: <PictureFile /> },
  { name: "OneDrive folder", icon: (
    <Icon b={[135, 159, 66, 63]}><path d="M139 163h38v50h-30l-8 6z" fill="#f6dc88" /><path d="M139 163l16 8v48l-16-6z" fill="#fbe9a9" /><path d="M162 218q-7-14 4-18 0-14 11-14 9 0 12 10 10 2 9 12-1 10-10 11z" fill="#0f6cc0" stroke="#eef" strokeWidth="2" /></Icon>
  ) },
  { name: "Word", open: true, icon: (
    <Icon b={[276, 153, 72, 72]}><path d="M316 163h29v52h-29z" fill="#fff" stroke="#2b579a" strokeWidth="2" /><path d="M318 171h22M318 179h22M318 187h22M318 195h22M318 203h22" stroke="#2b579a" strokeWidth="3" /><path d="M278 162l40-8v68l-40-8z" fill="#2b5797" /><path d="M286 177l5 22 7-20 7 20 5-22" fill="none" stroke="#fff" strokeWidth="4" /></Icon>
  ) },
  { name: "Xara", icon: (
    <Icon b={[424, 153, 66, 66]}><circle cx="458" cy="187" r="30" fill="#151515" /><path d="M430 192l28-6 28 6q-6 20-28 23-20-3-28-23z" fill="#a9d32c" /><path d="M445 212l13-14 14 14q-14 8-27 0z" fill="#2c3a12" /><path d="M441 171l34 34" stroke="#ddd" strokeWidth="6" /><path d="M476 166l-38 40" stroke="#fff" strokeWidth="9" /><circle cx="458" cy="187" r="30" fill="none" stroke="#e4e4e4" strokeWidth="3" /></Icon>
  ) },
  { name: "Photoshop Elements", icon: (
    <Icon b={[573, 155, 63, 63]}><path d="M573 155h63v61h-63z" fill="#23233f" /><path d="M589 165l37 9-11 35-35-12z" fill="none" stroke="#7fa6c4" strokeWidth="3" /><circle cx="603" cy="187" r="8" fill="none" stroke="#1d86c6" strokeWidth="6" strokeDasharray="5 2" /></Icon>
  ) },
  { name: "Android Studio", icon: (
    <Icon b={[720, 153, 66, 72]}><circle cx="753" cy="185" r="30" fill="#7ab342" /><path d="M753 182l-18 36M753 182l19 36M738 201q14 10 29 0" fill="none" stroke="#eee" strokeWidth="6" /><circle cx="753" cy="178" r="8" fill="#555" /><path d="M750 166h6v8h-6z" fill="#555" /><circle cx="753" cy="178" r="3" fill="#ddd" /></Icon>
  ) },
  { name: "Camera", icon: (
    <Icon b={[864, 156, 72, 63]}><path d="M865 167h16l6-9h26l6 9h17v49h-71z" fill="#fff" /><circle cx="900" cy="190" r="15" fill="#000" /><path d="M895 208a18 18 0 0 0 20-27" fill="none" stroke="#000" strokeWidth="3" /></Icon>
  ) },
  { name: "Control Panel", icon: (
    <Icon b={[1014, 162, 66, 51]}><path d="M1015 167h61v44h-61z" fill="#58b9ef" stroke="#b8e2f7" strokeWidth="3" /><circle cx="1034" cy="184" r="10" fill="#fff" /><path d="M1034 184v-11a11 11 0 0 1 10 15z" fill="#f0a030" /><path d="M1051 178h17M1051 186h17M1022 202h43" stroke="#fff" strokeWidth="3" /></Icon>
  ) },
  { name: "X64 editor", icon: (
    <Icon b={[1158, 153, 72, 72]}><path d="M1160 155h69v68h-69z" fill="#16202c" stroke="#1bb0ec" strokeWidth="3" /><path d="M1161 156h18l20 33-20 33h-18l18-33z" fill="#1ba3ee" /><text x="1198" y="218" fontSize="20" fontWeight="600" fill="#1f86d8">64</text></Icon>
  ) },
  { name: "Publisher", open: true, active: true, icon: (
    <Icon b={[1305, 153, 72, 72]}><path d="M1340 165h36v38h-36z" fill="#fff" /><path d="M1342 172h24v39h-24z" fill="#fff" stroke="#0a7664" strokeWidth="3" /><path d="M1348 182h14M1348 190h14M1348 198h14" stroke="#0a7664" strokeWidth="3" /><path d="M1307 162l40-8v68l-40-8z" fill="#0a7664" /><path d="M1320 202v-25h8q8 0 8 8t-8 8h-8" fill="none" stroke="#fff" strokeWidth="5" /></Icon>
  ) },
];

function Taskbar() {
  return (
    <nav aria-label="Taskbar" className="flex h-10 shrink-0 items-stretch bg-[#010308] text-xs text-white">
      <button aria-label="Start" className="flex w-12 items-center justify-center">
        <Icon b={[48, 162, 48, 51]}><path d="M48 170l20-3v20H48zM71 166l25-3v24H71zM48 190h20v20l-20-3zM71 190h25v23l-25-3z" fill="#fff" /></Icon>
      </button>
      <button aria-label="Task view" className="flex w-12 items-center justify-center">
        <Icon b={[186, 165, 60, 48]}><path d="M199 168h34v39h-34zM193 172h-6v31h6M239 172h6v31h-6" fill="none" stroke="#fff" strokeWidth="3" /></Icon>
      </button>
      <span className="mx-1.5 my-auto h-4 w-1 border-x border-[#3a3a3a]" />
      <div className="ml-[7px] flex flex-1 gap-px">
        {taskIcons.map(({ name, open, active, icon }) => (
          <button key={name} aria-label={name} className={`relative flex w-12 shrink-0 items-center justify-center ${active ? "bg-[#34383c]" : ""}`}>
            {icon}
            {open && <span className={`absolute bottom-0 h-0.5 bg-[#a6d3f2] ${active ? "inset-x-0" : "inset-x-1"}`} />}
          </button>
        ))}
      </div>
      <div className="flex items-center">
        <button aria-label="Help and support" className="mr-6">
          <Icon b={[207, 294, 69, 66]}><circle cx="238" cy="327" r="31" fill="#fff" /><circle cx="238" cy="327" r="27" fill="#1590d8" /><path d="M228 320q0-11 11-11t11 10q0 7-7 10-4 3-4 8M239 341v6" fill="none" stroke="#fff" strokeWidth="7" /><circle cx="260" cy="342" r="15" fill="#f0a61c" /><path d="M260 332v4M260 339v12" stroke="#fff" strokeWidth="4" /></Icon>
        </button>
        <button aria-label="People" className="mr-[21px]">
          <Icon b={[345, 297, 48, 51]}><g fill="none" stroke="#fff" strokeWidth="4"><circle cx="375" cy="309" r="8" /><circle cx="360" cy="326" r="7" /><path d="M365 321q10-6 17-1 7 5 8 12M348 346q1-13 12-13t12 13" /></g></Icon>
        </button>
        <button aria-label="Show hidden icons" className="mr-2.5">
          <Icon b={[457, 312, 39, 24]}><path d="M460 333l17-17 17 17" fill="none" stroke="#fff" strokeWidth="4" /></Icon>
        </button>
        <button aria-label="Battery" className="mr-2.5">
          <Icon b={[525, 303, 48, 39]}><path d="M541 318h28v20h-38v-9M569 324h4v8h-4" fill="none" stroke="#fff" strokeWidth="3" /><path d="M545 322h20v12h-20zM527 309h14v8q-2 6-7 6t-7-6zM529 304h3v6h-3zM536 304h3v6h-3z" fill="#fff" /></Icon>
        </button>
        <button aria-label="Wi-Fi" className="mr-2">
          <Icon b={[606, 306, 39, 42]}><g fill="none" stroke="#fff" strokeWidth="3"><path d="M608 341q4-28 34-32" opacity=".8" /><path d="M616 342q4-20 26-24M624 343q3-12 18-16" /></g><circle cx="637" cy="339" r="5" fill="#fff" /></Icon>
        </button>
        <button aria-label="Volume" className="mr-[7px]">
          <Icon b={[669, 306, 51, 39]}><path d="M671 318h8l11-11v36l-11-11h-8z" fill="none" stroke="#fff" strokeWidth="3" /><path d="M696 317q5 8 0 16M703 311q9 14 0 28M710 307q12 18 0 36" fill="none" stroke="#fff" strokeWidth="3" /></Icon>
        </button>
        <time className="w-[60px] text-center text-[11px] leading-[18px]">10:03<br />11/04/2018</time>
        <button aria-label="Notifications, 15 new" className="relative mr-3 ml-4 h-8 w-[26px]">
          <svg width="17" height="17" viewBox="0 0 17 17" className="absolute top-1.5 left-0"><path d="M0 0h17v12H9v4l-4-4H0z" fill="#fff" /><path d="M2.500 3.500h12M2.500 6.500h12M2.500 9.500h6" stroke="#000" /></svg>
          <span className="absolute right-0.5 bottom-0 flex h-[17px] w-[17px] items-center justify-center rounded-full border border-[#777] bg-[#2b2b2b] text-[10px] font-semibold">15</span>
        </button>
        <span className="mr-1 h-10 w-px bg-[#555]" />
      </div>
    </nav>
  );
}

export default function App() {
  return (
    <div className={`flex h-screen flex-col overflow-hidden bg-[#f0f0f0] text-xs ${UI}`}>
      <TitleBar />
      <Ribbon />
      <main className="flex min-h-0 flex-1">
        <PagesPanel />
        <Workspace />
      </main>
      <StatusBar />
      <Taskbar />
    </div>
  );
}
